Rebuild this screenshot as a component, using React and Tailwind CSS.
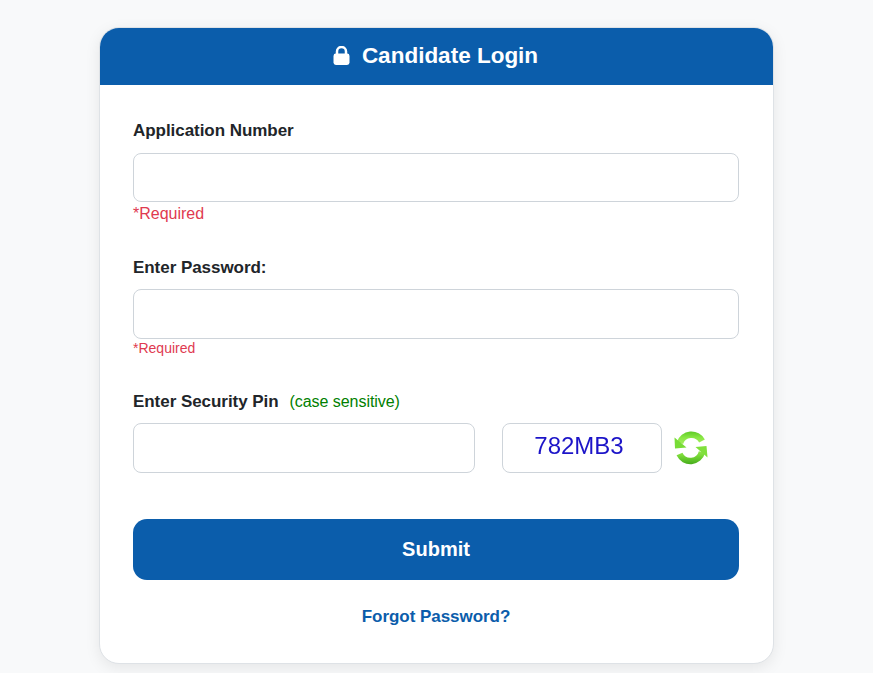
import React from "react";

function Lock() {
  return (
    <svg width="17" height="19" viewBox="0 0 17 19" className="mr-[12px]">
      <path d="M4 8.500V5.500a4.500 4.500 0 0 1 9 0V8.500" fill="none" stroke="#fff" strokeWidth="2.500" />
      <rect x="0.500" y="7.500" width="16" height="11.500" rx="2.400" fill="#fff" />
    </svg>
  );
}

function Refresh() {
  return (
    <svg width="36" height="38" viewBox="0 0 36 38" className="-translate-y-[1px] blur-[0.4px]">
      <defs>
        <linearGradient id="top" x1="0" y1="3" x2="0" y2="20" gradientUnits="userSpaceOnUse">
          <stop offset="0" stopColor="#5cc824" />
          <stop offset="0.4" stopColor="#8ae845" />
          <stop offset="1" stopColor="#b4f06e" />
        </linearGradient>
        <linearGradient id="bot" x1="0" y1="19" x2="0" y2="36" gradientUnits="userSpaceOnUse">
          <stop offset="0" stopColor="#a8ee62" />
          <stop offset="0.5" stopColor="#7ada38" />
          <stop offset="1" stopColor="#47ad1c" />
        </linearGradient>
      </defs>
      <path d="M7 15A12 12 0 0 1 29 13" fill="none" stroke="url(#top)" strokeWidth="6.500" />
      <path d="M1.500 9.500L13.500 19.500L2 20.500Z" fill="#78dc36" />
      <path d="M29 24A12 12 0 0 1 6.500 26" fill="none" stroke="url(#bot)" strokeWidth="6.500" />
      <path d="M34.500 29.500L22.500 19L33.500 18Z" fill="#80e03c" />
    </svg>
  );
}

function Field({ className = "" }) {
  return (
    <input
      type="text"
      className={`block rounded-[8px] border border-[#ced4da] bg-white outline-none ${className}`}
    />
  );
}

export default function App() {
  return (
    <div className="h-[673px] overflow-hidden bg-[#f8f9fa] pt-[27px] font-['Liberation_Sans',Arial,sans-serif]">
      <div className="ml-[99px] w-[675px] overflow-hidden rounded-[20px] border border-[#dee2e6] bg-white shadow-[0_4px_15px_rgba(0,0,0,0.08)]">
        <div className="flex h-[57px] items-center justify-center bg-[#0b5dab] pr-[2px] pb-[2px] text-[22.500px] font-bold text-white">
          <Lock />
          <span>Candidate Login</span>
        </div>
        <div className="pt-[35px] pr-[34px] pb-[36px] pl-[33px]">
          <div className="mt-[1px] mb-[12px] text-[17px] leading-[20px] font-bold tracking-[-0.05px] text-[#212529]">Application Number</div>
          <Field className="h-[49px] w-full" />
          <div className="mt-[2px] text-[16px] leading-[20px] text-[#e03a50]">*Required</div>

          <div className="mt-[34px] mb-[11px] text-[17px] leading-[20px] font-bold tracking-[-0.05px] text-[#212529]">Enter Password:</div>
          <Field className="h-[50px] w-full" />
          <div className="text-[14px] leading-[18px] text-[#e03a50]">*Required</div>

          <div className="mt-[35px] mb-[11px] flex items-baseline text-[#212529]">
            <span className="text-[17px] leading-[20px] font-bold tracking-[-0.05px]">Enter Security Pin</span>
            <span className="ml-[11px] text-[16px] leading-[20px] tracking-[-0.05px] text-[#008000]">(case sensitive)</span>
          </div>
          <div className="flex items-center">
            <Field className="h-[50px] w-[342px]" />
            <div className="ml-[27px] flex h-[50px] w-[160px] items-center justify-center rounded-[8px] border border-[#ced4da] bg-white text-[24px] text-[#1c14c8]">
              <span className="-translate-x-[3px] -translate-y-[2px] blur-[0.3px]">782MB3</span>
            </div>
            <div className="ml-[11px]"><Refresh /></div>
          </div>

          <button className="mt-[46px] block h-[61px] w-full rounded-[14px] bg-[#0b5dab] pb-[2px] text-[20px] font-bold text-white">Submit</button>
          <div className="mt-[27px] text-center text-[17px] leading-[20px] font-bold tracking-[-0.05px] text-[#0b5dab]">Forgot Password?</div>
        </div>
      </div>
    </div>
  );
}
